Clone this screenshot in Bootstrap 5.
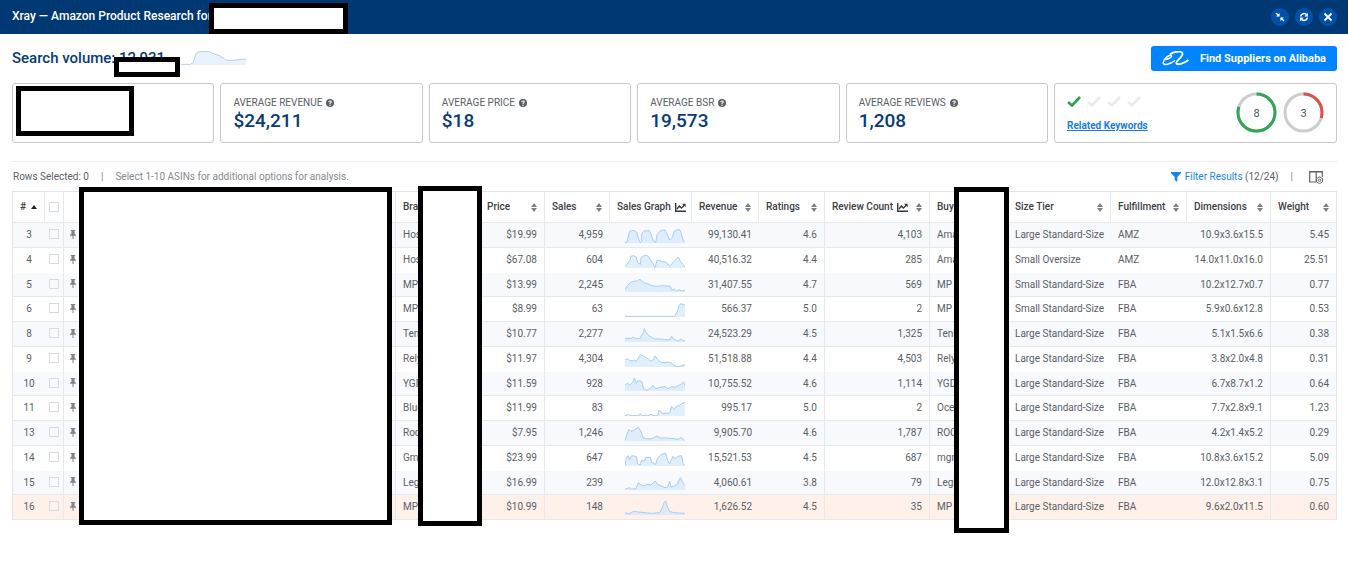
<!DOCTYPE html>
<html lang="en">
<head>
<meta charset="utf-8">
<meta name="viewport" content="width=device-width, initial-scale=1">
<title>Xray — Amazon Product Research</title>
<link href="https://cdn.jsdelivr.net/npm/bootstrap@5.3.0/dist/css/bootstrap.min.css" rel="stylesheet">
<style>
  body { font-family: Roboto, "Open Sans", sans-serif; font-size: 10px; line-height: 14px; color: #5a6066; background: #fff; }
  .topbar { background: #003873; height: 34px; padding: 0 11px 0 12px; }
  .topbar h1 { font-size: 12px; font-weight: 500; line-height: 32px; color: #fff; }
  .round-btn { width: 18px; height: 18px; border: 0; padding: 0; border-radius: 50%; background: #0052a8; color: #fff; }
  .hidden-box { position: absolute; z-index: 3; background: #fff; border: 5px solid #000; }
  .box-title { left: 197px; top: 3px; width: 139px; height: 31px; }
  .box-volume { left: 102px; top: 11px; width: 66px; height: 20px; }
  .box-stat { left: 3px; top: 2px; width: 118px; height: 50px; }
  .box-product { left: 67px; right: 945px; top: -4px; height: 338px; }
  .box-brand { right: 855px; width: 64px; top: -5px; height: 340px; }
  .box-buy { right: 328px; width: 55px; top: -4px; height: 346px; }
  main { padding: 12px 11px 24px 12px; }
  .navy { color: #073b78; }
  .volume { font-size: 15px; font-weight: 500; line-height: 24px; }
  .alibaba { font-size: 11px; font-weight: 700; line-height: 23px; color: #fff; background: #0084ff; border: 0; border-radius: 3px; height: 25px; width: 186px; padding: 0 11px; white-space: nowrap; }
  .stats { gap: 6px; margin-top: 12px; }
  .stat { flex: 1 1 0; min-width: 0; height: 60px; border: 1px solid #c6c8ca; border-radius: 3px; padding: 12px 12px 0; }
  .stat-wide { flex: 0 0 283px; padding: 8px 12px 0; }
  .stat-value { font-size: 19px; font-weight: 500; line-height: 22px; }
  .keywords { font-weight: 700; color: #1680e0; }
  .rule { border-top: 1px solid #ececee; margin-top: 18px; }
  .tools { height: 29px; padding: 0 14px 0 1px; }
  .blue { color: #1a86f0; }
  .faint { color: #858a8f; }
  .grid { width: 100%; table-layout: fixed; border-collapse: separate; border-spacing: 0; border: 1px solid #e3e6e9; border-bottom: 0; }
  .grid th { height: 31px; padding: 0 7px; font-weight: 500; color: #3b4045; white-space: nowrap; border-right: 1px solid #e6e9ec; border-bottom: 1px solid #e6e9ec; }
  .grid td { height: 25px; padding: 0 7px; white-space: nowrap; border-bottom: 1px solid #e6e9ec; line-height: 14px; }
  .grid th:last-child { border-right: 0; }
  .grid tbody tr:nth-child(4n+3) td { height: 24px; }
  .grid tbody tr:nth-child(4n+2) td { border-bottom-color: transparent; }
  .grid tbody tr:nth-child(odd) td { background: #f7f9fc; }
  .grid tbody tr.flagged td { background: #fff1ea; }
  .grid td.edge { border-right: 1px solid #e6e9ec; }
  .grid td.product { padding: 0 6px 2px; }
  .tick { appearance: none; display: block; width: 10px; height: 10px; margin: 0 auto; border: 1px solid #d9dcdf; background: #fff; }
  .grid th.pick { padding: 0; }
  .grid td.pick { padding: 0 0 2px; }
  .grid td.pick .tick { background: transparent; }
  svg { display: block; flex: none; }
  .w-num { width: 32px; } .w-pick { width: 19px; } .w-brand { width: 84px; } .w-price { width: 65px; }
  .w-sales { width: 65px; } .w-graph { width: 82px; } .w-rev { width: 67px; } .w-rate { width: 66px; }
  .w-count { width: 105px; } .w-buy { width: 78px; } .w-size { width: 103px; } .w-ful { width: 76px; }
  .w-dim { width: 84px; } .w-wt { width: 65px; }
</style>
<script src="https://cdn.jsdelivr.net/npm/bootstrap@5.3.0/dist/js/bootstrap.bundle.min.js"></script>
</head>
<body>
<svg width="0" height="0" class="position-absolute" aria-hidden="true">
  <symbol id="sort" viewBox="0 0 6 9"><path d="M3 0 6 4H0zM3 9 0 5h6z" fill="#7d8186"/></symbol>
  <symbol id="help" viewBox="0 0 8 8"><circle cx="4" cy="4" r="4" fill="#5c5f63"/><path d="M2.8 3.1C2.9 1.5 5.3 1.6 5.2 3 5.1 3.9 4 3.8 4 4.9" fill="none" stroke="#fff" stroke-width="1.1"/><circle cx="4" cy="6.2" r=".7" fill="#fff"/></symbol>
  <symbol id="chart" viewBox="0 0 11 9"><path d="M.7 0v8.2H11" fill="none" stroke="#33383d" stroke-width="1.4"/><path d="M2 6 4.3 3 6.5 5 9.5 2" fill="none" stroke="#33383d" stroke-width="1.3"/><path d="M7 .8h3.6v3.4z" fill="#33383d"/></symbol>
  <symbol id="check" viewBox="0 0 14 11"><path d="M1 6 5 9.500 13 1" fill="none" stroke="currentColor" stroke-width="2.600"/></symbol>
  <symbol id="pin" viewBox="0 0 6 9"><path d="M.8 0h4.400v1H4.500v2.600L6 5v.8H3.500V9h-1V5.800H0V5l1.500-1.400V1H.8z" fill="#7f8388"/></symbol>
</svg>

<header class="topbar d-flex align-items-start justify-content-between">
  <div class="position-relative">
    <h1 class="m-0">Xray — Amazon Product Research for</h1>
    <div class="hidden-box box-title"></div>
  </div>
  <div class="d-flex pt-2" style="gap:6px">
    <button class="round-btn" type="button" aria-label="Collapse"><svg width="18" height="18" viewBox="0 0 18 18"><path d="m5 5 3 3M13 13l-3-3" stroke="#fff" stroke-width="1.400"/><path d="M8.600 5v3.600H5zM9.400 13V9.400H13z" fill="#fff"/></svg></button>
    <button class="round-btn" type="button" aria-label="Refresh"><svg width="18" height="18" viewBox="0 0 18 18"><path d="M5.600 8.500C6 5.300 10 4.700 11.900 7M12.400 9.500C12 12.700 8 13.300 6.100 11" fill="none" stroke="#fff" stroke-width="1.500"/><path d="M13 4.800v3.700H9.300zM5 13.200V9.500h3.700z" fill="#fff"/></svg></button>
    <button class="round-btn" type="button" aria-label="Close"><svg width="18" height="18" viewBox="0 0 18 18"><path d="m5.500 5.500 7 7M12.500 5.500l-7 7" stroke="#fff" stroke-width="1.800"/></svg></button>
  </div>
</header>

<main>
  <div class="d-flex justify-content-between align-items-start">
    <div class="position-relative d-flex volume navy">
      <span>Search volume: 12,931</span>
      <svg class="ms-3 mt-1" width="65" height="15" viewBox="0 0 195 45"><path d="M0 43h28l9-6 7-25 6-6 18-2 18 1 16 8 14 4 18 12 14 3 26-3 12-2 12 2 9 1v15H0z" fill="#e9f1fc"/><path d="M0 43h28l9-6 7-25 6-6 18-2 18 1 16 8 14 4 18 12 14 3 26-3 12-2 12 2 9 1" fill="none" stroke="#b9cff0" stroke-width="3"/></svg>
      <div class="hidden-box box-volume"></div>
    </div>
    <button class="alibaba d-flex align-items-center justify-content-between" type="button">
      <svg width="27" height="15" viewBox="0 0 27 15"><path d="M3 8.500C7 8.500 10.500 5.500 9.300 4.500 7.500 3 2 7.500 1.200 11.500 1 15 8 13.500 13 9.500" fill="none" stroke="#fff" stroke-width="1.500"/><path d="M8 3.500C11 .5 19.500-.5 20.500 2.500 21.300 5.500 14 9.500 14.300 12 14.800 14.800 22 12.500 26.500 9" fill="none" stroke="#fff" stroke-width="1.900"/></svg>
      <span>Find Suppliers on Alibaba</span>
    </button>
  </div>

  <div class="stats d-flex">
    <div class="stat position-relative"><div class="hidden-box box-stat"></div></div>
    <div class="stat"><div class="d-flex align-items-center">AVERAGE REVENUE<svg class="ms-1" width="8" height="8"><use href="#help"/></svg></div><div class="stat-value navy">$24,211</div></div>
    <div class="stat"><div class="d-flex align-items-center">AVERAGE PRICE<svg class="ms-1" width="8" height="8"><use href="#help"/></svg></div><div class="stat-value navy">$18</div></div>
    <div class="stat"><div class="d-flex align-items-center">AVERAGE BSR<svg class="ms-1" width="8" height="8"><use href="#help"/></svg></div><div class="stat-value navy">19,573</div></div>
    <div class="stat"><div class="d-flex align-items-center">AVERAGE REVIEWS<svg class="ms-1" width="8" height="8"><use href="#help"/></svg></div><div class="stat-value navy">1,208</div></div>
    <div class="stat stat-wide d-flex justify-content-between">
      <div>
        <div class="d-flex pt-1 mb-2" style="gap:6px;color:#e9ecee">
          <svg width="14" height="11" color="#2f9e57"><use href="#check"/></svg><svg width="14" height="11"><use href="#check"/></svg><svg width="14" height="11"><use href="#check"/></svg><svg width="14" height="11"><use href="#check"/></svg>
        </div>
        <a class="keywords d-block pt-1" href="#">Related Keywords</a>
      </div>
      <div class="d-flex" style="gap:6px">
        <svg width="41" height="41" viewBox="0 0 41 41"><circle cx="20.500" cy="20.500" r="18.500" fill="none" stroke="#cbcdcf" stroke-width="3"/><circle cx="20.500" cy="20.500" r="18.500" fill="none" stroke="#34a457" stroke-width="3" pathLength="100" stroke-dasharray="80 100" transform="rotate(-90 20.500 20.500)"/><text x="20.500" y="24.500" text-anchor="middle" font-size="11" fill="#495663">8</text></svg>
        <svg width="41" height="41" viewBox="0 0 41 41"><circle cx="20.500" cy="20.500" r="18.500" fill="none" stroke="#cbcdcf" stroke-width="3"/><circle cx="20.500" cy="20.500" r="18.500" fill="none" stroke="#d9534a" stroke-width="3" pathLength="100" stroke-dasharray="30 100" transform="rotate(-90 20.500 20.500)"/><text x="20.500" y="24.500" text-anchor="middle" font-size="11" fill="#495663">3</text></svg>
      </div>
    </div>
  </div>

  <div class="rule"></div>
  <div class="tools d-flex align-items-center justify-content-between">
    <div class="d-flex"><span>Rows Selected: 0</span><span class="faint mx-2 px-1">|</span><span class="faint">Select 1-10 ASINs for additional options for analysis.</span></div>
    <div class="d-flex align-items-center">
      <svg width="10" height="10" viewBox="0 0 10 10"><path d="M0 0h10v1L6.300 5v5L3.700 8V5L0 1z" fill="#1680f0"/></svg>
      <a class="blue text-decoration-none ps-1" href="#">Filter Results</a><span>&nbsp;(12/24)</span><span class="faint mx-2 px-1">|</span>
      <button class="border-0 p-0 bg-transparent ms-1" type="button" aria-label="Columns"><svg width="14" height="14" viewBox="0 0 14 14"><path d="M7 12H.7V1.500h12.600V7M7.200 1.500V12M.7 2h12.600" fill="none" stroke="#5f6368" stroke-width="1.200"/><path d="m10.500 6.800 3 1.700v3.400l-3 1.700-3-1.700V8.500z" fill="#fff" stroke="#5f6368"/><circle cx="10.500" cy="10.200" r="1.200" fill="none" stroke="#5f6368"/></svg></button>
    </div>
  </div>

  <div class="position-relative">
    <table class="grid">
      <colgroup><col class="w-num"><col class="w-pick"><col><col class="w-brand"><col class="w-price"><col class="w-sales"><col class="w-graph"><col class="w-rev"><col class="w-rate"><col class="w-count"><col class="w-buy"><col class="w-size"><col class="w-ful"><col class="w-dim"><col class="w-wt"></colgroup>
      <thead><tr id="heads"></tr></thead>
      <tbody id="rows"></tbody>
    </table>
    <div class="hidden-box box-product"></div>
    <div class="hidden-box box-brand"></div>
    <div class="hidden-box box-buy"></div>
  </div>
</main>

<script>
  // [label, sortable, trend icon]
  const heads = [
    ['', 0], ['Brand', 0], ['Price', 1], ['Sales', 1], ['Sales Graph', 0, 1], ['Revenue', 1], ['Ratings', 1], ['Review Count', 1, 1],
    ['Buy Box', 0], ['Size Tier', 1], ['Fulfillment', 1], ['Dimensions', 1], ['Weight', 1]
  ];
  const rows = [
    [3,'Hos','$19.99','4,959','99,130.41','4.6','4,103','Ama','Large Standard-Size','AMZ','10.9x3.6x15.5','5.45','0,44 6,42 10,24 14,10 20,8 30,8 36,14 40,30 46,44 50,40 50,16 58,8 68,9 72,7 78,18 84,36 92,44 96,20 104,10 114,6 120,6 126,18 134,36 142,28 148,10 156,5 164,5 168,14 174,36 180,42'],
    [4,'Hos','$67.08','604','40,516.32','4.4','285','Ama','Small Oversize','AMZ','14.0x11.0x16.0','25.51','0,40 8,32 14,24 18,10 26,8 34,12 38,28 46,34 48,14 56,8 68,8 76,20 84,32 90,44 96,22 104,22 112,26 122,26 128,34 136,38 146,26 154,18 160,12 166,26 174,34 180,42'],
    [5,'MP','$13.99','2,245','31,407.55','4.7','569','MP','Small Standard-Size','FBA','10.2x12.7x0.7','0.77','0,38 6,28 14,18 22,14 30,12 38,12 44,6 50,12 60,18 72,22 80,26 94,28 110,26 136,28 140,40 148,36 154,42 162,38 170,42 180,40'],
    [6,'MP','$8.99','63','566.37','5.0','2','MP','Small Standard-Size','FBA','5.9x0.6x12.8','0.53','0,43 145,43 150,42 158,26 162,10 168,5 174,8 180,9'],
    [8,'Ten','$10.77','2,277','24,523.29','4.5','1,325','Tenl','Large Standard-Size','FBA','5.1x1.5x6.6','0.38','0,34 20,34 24,30 32,34 46,34 50,24 56,16 58,5 62,14 72,26 82,32 90,36 110,36 118,38 134,38 140,28 148,38 160,42 168,36 176,42 180,40'],
    [9,'Rely','$11.97','4,304','51,518.88','4.4','4,503','Rely','Large Standard-Size','FBA','3.8x2.0x4.8','0.31','0,24 8,20 14,26 22,26 28,24 34,28 42,14 46,8 52,10 62,16 72,22 76,28 84,24 90,12 98,22 106,30 118,32 130,30 140,34 150,42 160,44 180,38'],
    [10,'YGD','$11.59','928','10,755.52','4.6','1,114','YGD','Large Standard-Size','FBA','6.7x8.7x1.2','0.64','0,26 8,22 14,28 24,18 28,6 34,22 38,14 50,16 56,38 64,43 74,38 84,28 92,38 104,34 120,32 130,38 140,32 150,34 158,30 166,26 176,18 180,30'],
    [11,'Blue','$11.99','83','995.17','5.0','2','Oce','Large Standard-Size','FBA','7.7x2.8x9.1','1.23','0,44 10,41 20,44 42,44 46,38 50,44 70,44 78,40 86,44 98,44 102,28 108,32 112,38 128,36 134,36 140,16 148,26 154,16 162,14 170,8 180,4'],
    [13,'Roc','$7.95','1,246','9,905.70','4.6','1,787','ROC','Large Standard-Size','FBA','4.2x1.4x5.2','0.29','0,44 6,24 12,10 18,16 28,12 40,4 48,16 54,34 62,38 80,38 96,30 106,36 130,36 160,40 168,34 180,44'],
    [14,'Gm','$23.99','647','15,521.53','4.5','687','mgn','Large Standard-Size','FBA','10.8x3.6x15.2','5.09','0,44 4,20 10,14 14,26 20,14 34,16 38,38 46,42 50,28 58,30 62,20 76,18 80,34 92,40 98,20 110,10 122,6 128,28 134,38 144,16 150,24 158,16 170,14 174,38 180,44'],
    [15,'Leg','$16.99','239','4,060.61','3.8','79','Legi','Large Standard-Size','FBA','12.0x12.8x3.1','0.75','0,42 14,38 20,42 32,42 40,24 50,30 58,32 66,28 78,30 90,18 98,28 108,32 120,38 128,36 134,18 138,36 146,34 156,28 166,8 174,24 180,32'],
    [16,'MP','$10.99','148','1,626.52','4.5','35','MP','Large Standard-Size','FBA','9.6x2.0x11.5','0.60','0,38 12,42 26,34 40,36 60,38 80,40 104,38 112,22 118,6 122,3 126,18 134,34 146,38 180,40']
  ];
  const icon = (id, w, h, cls = '') => `<svg class="${cls}" width="${w}" height="${h}"><use href="#${id}"/></svg>`;
  document.getElementById('heads').innerHTML =
    `<th scope="col"><span class="d-flex align-items-center justify-content-between">#<svg width="6" height="4" viewBox="0 0 6 4"><path d="M3 0 6 4H0z" fill="#222"/></svg></span></th>
     <th scope="col" class="pick"><input type="checkbox" class="tick" aria-label="Select all"></th>` +
    heads.map(([name, sort, trend]) => `<th scope="col"><span class="d-flex align-items-center"><span>${name}</span>${trend ? icon('chart', 11, 9, 'ms-1') : ''}${sort ? icon('sort', 6, 9, 'ms-auto') : ''}</span></th>`).join('');
  document.getElementById('rows').innerHTML = rows.map(r => `<tr class="${r[0] === 16 ? 'flagged' : ''}">
    <td class="text-center">${r[0]}</td><td class="pick edge"><input type="checkbox" class="tick" aria-label="Select row ${r[0]}"></td>
    <td class="product edge">${icon('pin', 6, 9)}</td><td>${r[1]}</td>
    <td class="text-end edge">${r[2]}</td><td class="text-end">${r[3]}</td>
    <td><svg class="ms-2" width="60" height="15" viewBox="0 0 180 45"><polygon points="0,45 ${r[12]} 180,45" fill="#cfe6fb" fill-opacity=".65"/><polyline points="${r[12]}" fill="none" stroke="#a9cdf0" stroke-width="3"/></svg></td>
    <td class="text-end">${r[4]}</td><td class="text-end edge">${r[5]}</td><td class="text-end edge">${r[6]}</td><td>${r[7]}</td>
    <td>${r[8]}</td><td>${r[9]}</td><td class="text-end edge">${r[10]}</td><td class="text-end">${r[11]}</td></tr>`).join('');
</script>
</body>
</html>
